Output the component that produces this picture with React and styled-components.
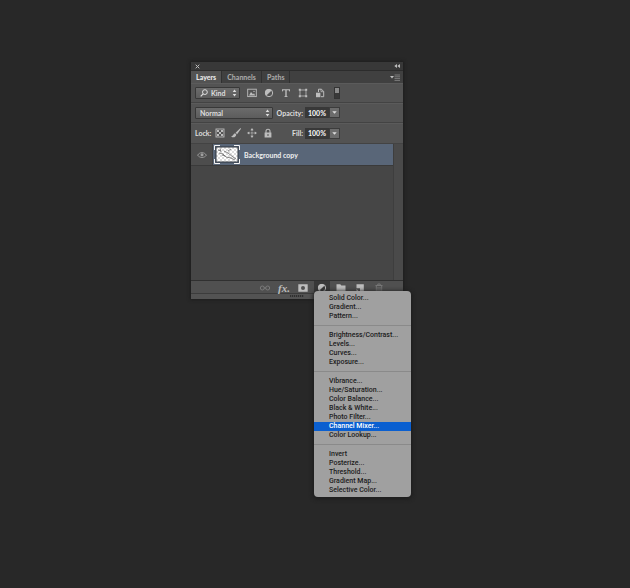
import { useState } from "react"
import styled, { createGlobalStyle } from "styled-components"

const GlobalStyle = createGlobalStyle`
    * {
        box-sizing: border-box;
    }
    body {
        background-color: #282828;
        margin: 0;
    }
    button, input, select {
        border: none;
        color: inherit;
        font: inherit;
        margin: 0;
        padding: 0;
    }
    svg {
        display: block;
    }
`
const Workspace = styled.main`
    color: #DEDEDE;
    display: flex;
    font-family: Lato, sans-serif;
    font-size: 7px;
    font-weight: 700;
    justify-content: center;
    line-height: 10px;
    min-height: 100vh;
    padding: 62px 36px 90px 0;
`
const Panel = styled.section`
    align-self: flex-start;
    background-color: #535353;
    box-shadow: 0 0 3px 1px #1E1E1E;
    max-width: 212px;
    width: 100%;
`
const TitleBar = styled.header`
    align-items: center;
    background-color: #383838;
    border-bottom: 1px solid #2C2C2C;
    display: flex;
    height: 9px;
    justify-content: space-between;
    padding: 0 3px 0 4px;
`
const IconButton = styled.button`
    align-items: center;
    background: none;
    color: ${({ $dim }) => $dim ? "#7A7A7A" : "#BDBDBD"};
    display: flex;
    justify-content: center;
`
const TabBar = styled.div`
    align-items: stretch;
    background-color: #404040;
    display: flex;
    height: 12px;
`
const Tab = styled.button`
    background-color: ${({ $active }) => $active ? "#535353" : "#404040"};
    border-right: 1px solid #303030;
    color: ${({ $active }) => $active ? "#E8E8E8" : "#A6A6A6"};
    font-weight: 900;
    padding: 0 5px;
`
const PanelMenu = styled(IconButton)`
    margin-left: auto;
    padding-right: 3px;
`
const Row = styled.div`
    align-items: center;
    border-bottom: 1px solid #434343;
    box-shadow: inset 0 1px #5B5B5B;
    display: flex;
    height: ${({ $tall }) => $tall ? "21px" : "20px"};
    padding-left: 4px;
`
const SelectBox = styled.label`
    align-items: center;
    background: linear-gradient(#6B6B6B, #5C5C5C);
    border: 1px solid #383838;
    border-radius: 1px;
    display: flex;
    gap: 3px;
    height: 12px;
    padding: 0 2px 0 4px;
    width: ${({ $wide }) => $wide ? "78px" : "45px"};
`
const Select = styled.select`
    appearance: none;
    background: none;
    flex: 1;
    min-width: 0;
    outline: none;
`
const FilterIcons = styled.div`
    align-items: center;
    display: flex;
    gap: 7px;
    margin-left: 7px;
`
const LockText = styled.span`
    width: 17px;
`
const LockIcons = styled(FilterIcons)`
    gap: 6px;
    margin-left: 3px;
`
const FilterSwitch = styled.button`
    background: linear-gradient(#8A8A8A 50%, #383838 50%);
    border: 1px solid #343434;
    height: 12px;
    margin-left: 9px;
    width: 6px;
`
const AmountLabel = styled.label`
    text-align: right;
    width: 30px;
`
const Amount = styled.input`
    background-color: #383838;
    color: #F0F0F0;
    font-weight: 900;
    height: 11px;
    margin-left: 2px;
    text-align: center;
    width: 24px;
`
const AmountButton = styled.button`
    align-items: center;
    background-color: #6C6C6C;
    border: 1px solid #3C3C3C;
    display: flex;
    height: 11px;
    justify-content: center;
    width: 11px;
`
const LayerArea = styled.div`
    background-color: #464646;
    display: flex;
    height: 136px;
`
const LayerList = styled.ul`
    flex: 1;
    list-style: none;
    margin: 0;
    padding: 0;
`
const Track = styled.div`
    background-color: #4A4A4A;
    border-left: 1px solid #3E3E3E;
    width: 10px;
`
const Layer = styled.li`
    align-items: stretch;
    border-bottom: 1px solid #3A3A3A;
    display: flex;
    height: 22px;
`
const EyeButton = styled(IconButton)`
    background-color: #4D4D4D;
    border-right: 1px solid #404040;
    color: #A0A0A0;
    width: 22px;
`
const LayerName = styled.button`
    align-items: center;
    background-color: #596678;
    color: #F0F0F0;
    display: flex;
    flex: 1;
    gap: 4px;
    padding-left: 1px;
`
const Footer = styled.footer`
    align-items: flex-end;
    background-color: #505050;
    border-bottom: 1px solid #3C3C3C;
    border-top: 1px solid #303030;
    display: flex;
    gap: 3px;
    height: 14px;
    justify-content: flex-end;
    padding-right: 16px;
`
const FooterItem = styled.div`
    background-color: ${({ $open }) => $open ? "#383838" : "transparent"};
    position: relative;
    width: 16px;
`
const FooterButton = styled(IconButton)`
    height: 12px;
    padding-top: 1px;
    width: 100%;
`
const Grip = styled.div`
    display: flex;
    height: 5px;
    justify-content: center;
    padding-top: 1px;
    &::after {
        background: repeating-linear-gradient(90deg, #303030 0 1px, #4A4A4A 1px 2px);
        content: "";
        height: 2px;
        width: 14px;
    }
`
const Menu = styled.div`
    background-color: #A0A0A0;
    border-radius: 4px;
    box-shadow: 0 1px 4px 1px #1C1C1C;
    color: #1C1C1C;
    font-family: Roboto, sans-serif;
    font-size: 7px;
    font-weight: 500;
    left: 0;
    line-height: 9px;
    padding: 3px 0 2px;
    position: absolute;
    top: 10px;
    width: 97px;
    z-index: 1;
`
const MenuItem = styled.button`
    background-color: ${({ $active }) => $active ? "#0A5FD0" : "transparent"};
    color: ${({ $active }) => $active ? "#FFF" : "inherit"};
    display: block;
    height: 9px;
    padding-left: 15px;
    text-align: left;
    white-space: nowrap;
    width: 100%;
`
const Divider = styled.hr`
    background-color: #8A8A8A;
    border: none;
    height: 1px;
    margin: 4px 0 5px;
`

const menuGroups = [
    ["Solid Color...", "Gradient...", "Pattern..."],
    ["Brightness/Contrast...", "Levels...", "Curves...", "Exposure..."],
    ["Vibrance...", "Hue/Saturation...", "Color Balance...", "Black & White...", "Photo Filter...", "Channel Mixer...", "Color Lookup..."],
    ["Invert", "Posterize...", "Threshold...", "Gradient Map...", "Selective Color..."],
]

const Icon = ({ w = 10, h = 10, children }) => (
    <svg width={w} height={h} viewBox={`0 0 ${w} ${h}`} fill="none" stroke="currentColor" aria-hidden="true">
        {children}
    </svg>
)

const Steppers = () => (
    <Icon w={5} h={8}><path d="M.7 3 2.5.6 4.3 3zM.7 5l1.8 2.4L4.3 5z" fill="currentColor" stroke="none" /></Icon>
)
const DownArrow = () => (
    <Icon w={5} h={3}><path d="M.3.2h4.4L2.5 2.8z" fill="currentColor" stroke="none" /></Icon>
)
const Search = () => (
    <Icon w={8} h={8}><circle cx="4.9" cy="3.1" r="2.4" /><path d="M3.2 4.8.7 7.3" strokeWidth="1.2" /></Icon>
)
const Pixels = () => (
    <Icon><rect x=".7" y="1.2" width="8.6" height="7.4" strokeWidth=".9" /><path d="M2 7.5 4 4l2 2.2 1-1 1.2 2.3z" fill="currentColor" stroke="none" /><circle cx="7" cy="3.4" r=".7" fill="currentColor" stroke="none" /></Icon>
)
const Adjustment = () => (
    <Icon><circle cx="5" cy="5" r="3.7" /><path d="M7.6 2.4A3.7 3.7 0 1 0 2.4 7.6z" fill="currentColor" stroke="none" /></Icon>
)
const TypeTool = () => (
    <Icon><path d="M1 1.2h8v2.3h-.6c-.2-1-.5-1.3-1.4-1.3H5.7v5.5c0 .6.2.7 1.1.8v.5H3.2v-.5c.9-.1 1.1-.2 1.1-.8V2.2H3c-.9 0-1.2.3-1.4 1.3H1z" fill="currentColor" stroke="none" /></Icon>
)
const Shape = () => (
    <Icon><path d="M2 2h6v6H2z" strokeWidth=".8" /><path d="M.8.8h2v2h-2zM7.2.8h2v2h-2zM.8 7.2h2v2h-2zM7.2 7.2h2v2h-2z" fill="currentColor" stroke="none" /></Icon>
)
const SmartObject = () => (
    <Icon><path d="M3.5 4V1.2h2.8l2.4 2.2v5.3H6" /><path d="M6 1v2.7h2.7" strokeWidth=".8" /><rect x="1" y="4.7" width="4.4" height="4.5" fill="currentColor" stroke="none" /></Icon>
)
const Checker = () => (
    <Icon><rect x="1" y="1" width="8" height="8" strokeWidth=".9" /><path d="M2 2h2v2H2zM6 2h2v2H6zM4 4h2v2H4zM2 6h2v2H2zM6 6h2v2H6z" fill="currentColor" stroke="none" /></Icon>
)
const Brush = () => (
    <Icon><path d="M9.5 0 4.6 4.7l1.5 1.5L10 .8zM4.1 5.2C2.3 5.3 2.6 7.8 0 8.4c2 1.7 5 1 5.3-1.9z" fill="currentColor" stroke="none" /></Icon>
)
const Move = () => (
    <Icon><path d="M5 2v6M2 5h6" strokeWidth=".9" strokeDasharray="1.4 .8" /><path d="M5 0l1.6 2.2H3.4zM5 10l1.6-2.2H3.4zM0 5l2.2-1.6v3.2zM10 5 7.8 3.4v3.2z" fill="currentColor" stroke="none" /></Icon>
)
const Lock = () => (
    <Icon><path d="M3 5V3.2a2 2 0 0 1 4 0V5" strokeWidth="1.1" /><path d="M1.6 4.4h6.8v5H1.6zM4.5 6v2h1V6z" fill="currentColor" fillRule="evenodd" stroke="none" /></Icon>
)
const Eye = () => (
    <Icon w={10} h={8}><path d="M.6 4.2C2.6.8 7.4.8 9.4 4.2 7.4 7.2 2.6 7.2.6 4.2z" strokeWidth=".9" /><circle cx="5" cy="3.8" r="1.5" fill="currentColor" stroke="none" /></Icon>
)
const Links = () => (
    <Icon w={12} h={8}><circle cx="3.3" cy="4" r="2" /><circle cx="8.7" cy="4" r="2" /><path d="M5 4h2" /></Icon>
)
const Mask = () => (
    <Icon><path d="M.3 1.3h9.4v7.4H.3zM5 3a2 2 0 1 0 0 4 2 2 0 0 0 0-4z" fill="currentColor" fillRule="evenodd" stroke="none" /></Icon>
)
const Folder = () => (
    <Icon><path d="M.5 1.2h3.8l1 1.3h4.2V9h-9z" fill="currentColor" stroke="none" /></Icon>
)
const NewLayer = () => (
    <Icon><path d="M1.5 1.2h7.3V9H5V5.2H1.5z" fill="currentColor" stroke="none" /><path d="M1.5 6 4.2 8.8H1.5z" fill="currentColor" stroke="none" /></Icon>
)
const Trash = () => (
    <Icon><path d="M1.5 2.5h7M3.8 2V1h2.4v1M2.3 3v6h5.4V3M4 4v4M6 4v4" strokeWidth=".9" /></Icon>
)

const Thumbnail = () => (
    <svg width="26" height="19" viewBox="0 0 26 19" aria-hidden="true">
        <defs>
            <pattern id="checker" width="4" height="4" patternUnits="userSpaceOnUse">
                <path d="M0 0h4v4H0z" fill="#FFF" />
                <path d="M0 0h2v2H0zM2 2h2v2H2z" fill="#DCDCDC" />
            </pattern>
        </defs>
        <path d="M.5 5V.5H6M20 .5h5.5V5M25.5 14v4.5H20M6 18.5H.5V14" fill="none" stroke="#F4F4F4" />
        <path d="M1.5 1.5h23v16h-23z" fill="#2F353D" />
        <path d="M2.5 2.5h21v14h-21z" fill="url(#checker)" />
        <path d="M4 5l3 1M6 3.5l1 3M5 8l4 1 3 3 5 1 4 2M10 6l4 2 5 4 3 2M8 10l3 1M14 6l3-2" fill="none" stroke="#6A6A6A" strokeWidth=".8" />
    </svg>
)

const FxText = styled.span`
    font-family: "Liberation Serif", serif;
    font-size: 11px;
    font-style: italic;
    font-weight: 700;
`

const App = () => {

    const [open, setOpen] = useState(true)
    const [current, setCurrent] = useState("Channel Mixer...")

    return (
        <>
            <GlobalStyle />
            <Workspace>
                <Panel aria-label="Layers">
                    <TitleBar>
                        <IconButton aria-label="Close"><Icon w={5} h={5}><path d="m.7.7 3.6 3.6M4.3.7.7 4.3" /></Icon></IconButton>
                        <IconButton aria-label="Collapse"><Icon w={6} h={4}><path d="M3 0v4L.3 2zM6 0v4L3.3 2z" fill="currentColor" stroke="none" /></Icon></IconButton>
                    </TitleBar>
                    <TabBar role="tablist">
                        <Tab role="tab" aria-selected="true" $active>Layers</Tab>
                        <Tab role="tab" aria-selected="false">Channels</Tab>
                        <Tab role="tab" aria-selected="false">Paths</Tab>
                        <PanelMenu aria-label="Panel menu">
                            <Icon w={10} h={7}><path d="M0 2h4L2 4.5z" fill="currentColor" stroke="none" /><path d="M4.5 1H10M4.5 2.8H10M4.5 4.6H10M4.5 6.4H10" strokeWidth=".8" opacity=".6" /></Icon>
                        </PanelMenu>
                    </TabBar>
                    <Row>
                        <SelectBox>
                            <Search />
                            <Select aria-label="Filter type"><option>Kind</option></Select>
                            <Steppers />
                        </SelectBox>
                        <FilterIcons>
                            <IconButton aria-label="Pixel layers"><Pixels /></IconButton>
                            <IconButton aria-label="Adjustment layers"><Adjustment /></IconButton>
                            <IconButton aria-label="Type layers"><TypeTool /></IconButton>
                            <IconButton aria-label="Shape layers"><Shape /></IconButton>
                            <IconButton aria-label="Smart objects"><SmartObject /></IconButton>
                        </FilterIcons>
                        <FilterSwitch aria-label="Filtering on or off" />
                    </Row>
                    <Row>
                        <SelectBox $wide>
                            <Select aria-label="Blend mode"><option>Normal</option></Select>
                            <Steppers />
                        </SelectBox>
                        <AmountLabel htmlFor="opacity">Opacity:</AmountLabel>
                        <Amount id="opacity" defaultValue="100%" />
                        <AmountButton aria-label="Opacity slider"><DownArrow /></AmountButton>
                    </Row>
                    <Row $tall>
                        <LockText>Lock:</LockText>
                        <LockIcons>
                            <IconButton aria-label="Lock transparent pixels"><Checker /></IconButton>
                            <IconButton aria-label="Lock image pixels"><Brush /></IconButton>
                            <IconButton aria-label="Lock position"><Move /></IconButton>
                            <IconButton aria-label="Lock all"><Lock /></IconButton>
                        </LockIcons>
                        <AmountLabel htmlFor="fill">Fill:</AmountLabel>
                        <Amount id="fill" defaultValue="100%" />
                        <AmountButton aria-label="Fill slider"><DownArrow /></AmountButton>
                    </Row>
                    <LayerArea>
                        <LayerList>
                            <Layer>
                                <EyeButton aria-label="Toggle visibility"><Eye /></EyeButton>
                                <LayerName><Thumbnail />Background copy</LayerName>
                            </Layer>
                        </LayerList>
                        <Track />
                    </LayerArea>
                    <Footer>
                        <FooterItem><FooterButton $dim aria-label="Link layers"><Links /></FooterButton></FooterItem>
                        <FooterItem><FooterButton aria-label="Layer style"><FxText>fx.</FxText></FooterButton></FooterItem>
                        <FooterItem><FooterButton aria-label="Add mask"><Mask /></FooterButton></FooterItem>
                        <FooterItem $open={open}>
                            <FooterButton aria-label="New adjustment layer" aria-expanded={open} onClick={() => setOpen(!open)}><Adjustment /></FooterButton>
                            {open && (
                                <Menu role="menu">
                                    {
                                        menuGroups.map((group, i) =>
                                            <div key={group[0]}>
                                                {i > 0 && <Divider />}
                                                {
                                                    group.map(name =>
                                                        <MenuItem key={name} role="menuitem" $active={name === current} onMouseEnter={() => setCurrent(name)}>
                                                            {name}
                                                        </MenuItem>
                                                    )
                                                }
                                            </div>
                                        )
                                    }
                                </Menu>
                            )}
                        </FooterItem>
                        <FooterItem><FooterButton aria-label="New group"><Folder /></FooterButton></FooterItem>
                        <FooterItem><FooterButton aria-label="New layer"><NewLayer /></FooterButton></FooterItem>
                        <FooterItem><FooterButton $dim aria-label="Delete layer"><Trash /></FooterButton></FooterItem>
                    </Footer>
                    <Grip />
                </Panel>
            </Workspace>
        </>
    )
}

export default App;
